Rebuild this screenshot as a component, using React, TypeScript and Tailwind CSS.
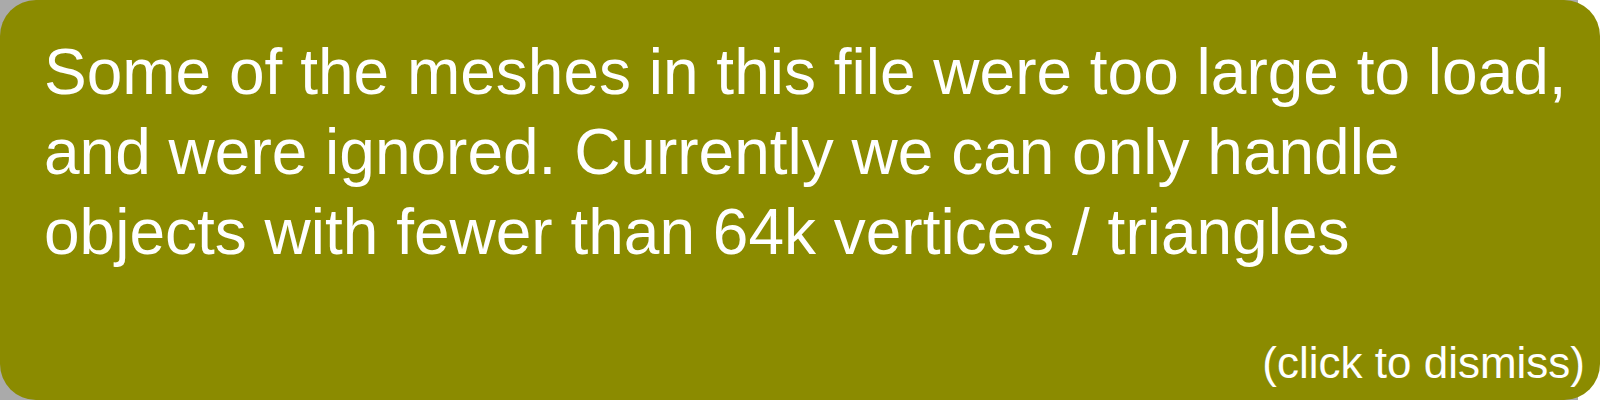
export default function App() {
  return (
    <div className="relative w-[1600px] h-[400px] bg-white overflow-hidden">
      <div className="w-[1578px] h-[400px] bg-[#aaaaaa]" />
      <div
        className="absolute inset-0 rounded-[36px] bg-[#8b8b00] text-white flex flex-col pl-[44px] pr-[15px] pt-[32px] pb-[12px]"
        style={{ fontFamily: '"Liberation Sans", Arial, sans-serif' }}
      >
        <p className="text-[64px] leading-[80px]">
          Some of the meshes in this file were too large to load, and were ignored. Currently we can only handle objects with fewer than 64k vertices / triangles
        </p>
        <div className="mt-auto text-right text-[44px] leading-[50px]">(click to dismiss)</div>
      </div>
    </div>
  );
}
